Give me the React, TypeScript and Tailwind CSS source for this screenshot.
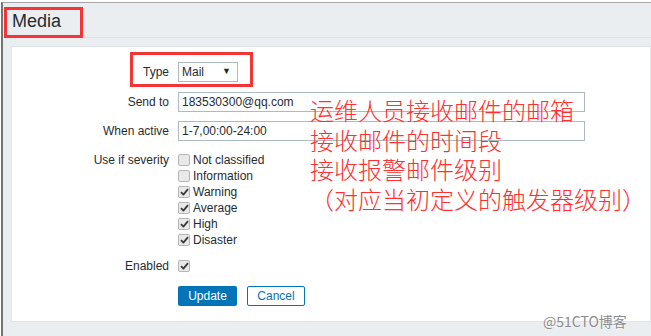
import React from 'react';

const font = { fontFamily: '"Liberation Sans", Arial, sans-serif' };

function Check({ checked }: { checked?: boolean }) {
  return (
    <span className="flex h-[12px] w-[12px] shrink-0 items-center justify-center rounded-[2px] border border-[#b5b5b5] bg-[#e9e9e9]">
      {checked && (
        <svg width="9" height="8" viewBox="0 0 9 8">
          <path d="M1 4.2 L3.4 6.6 L8 1.2" fill="none" stroke="#3a3a3a" strokeWidth="1.8" strokeLinejoin="round" />
        </svg>
      )}
    </span>
  );
}

export default function App() {
  const severities = [
    { label: 'Not classified', on: false },
    { label: 'Information', on: false },
    { label: 'Warning', on: true },
    { label: 'Average', on: true },
    { label: 'High', on: true },
    { label: 'Disaster', on: true },
  ];

  return (
    <div className="relative h-[336px] w-[651px] overflow-hidden bg-white pl-[1px] pt-[2px] text-[12px] text-[#1f2c33]" style={font}>
      <div className="h-full border-l-2 border-t border-l-[#747474] border-t-[#a6a6a6] bg-[#ebeef0]">
        {/* header */}
        <div className="flex h-[35px] items-center border-b border-[#dde2e5] pl-[9px] pt-[2px] text-[18px]">
          Media
        </div>

        {/* form panel */}
        <div className="ml-[8px] mt-[8px] border border-[#dfe4e7] bg-white pb-[15px] pt-[15px]">
          <div className="grid grid-cols-[157px_1fr] gap-x-[9px]">
            <div className="flex h-[20px] items-center justify-end">Type</div>
            <div className="flex h-[20px] w-[60px] items-center justify-between border border-[#acbbc2] pl-[3px] pr-[6px]">
              <span>Mail</span>
              <span className="text-[9px]">▼</span>
            </div>

            <div className="mt-[10px] flex h-[20px] items-center justify-end">Send to</div>
            <div className="mt-[10px] flex h-[20px] w-[407px] items-center border border-[#acbbc2] pl-[3px]">183530300@qq.com</div>

            <div className="mt-[9px] flex h-[20px] items-center justify-end">When active</div>
            <div className="mt-[9px] flex h-[20px] w-[407px] items-center border border-[#acbbc2] pl-[3px]">1-7,00:00-24:00</div>

            <div className="mt-[11px] flex h-[16px] items-center justify-end">Use if severity</div>
            <div className="mt-[11px] flex flex-col">
              {severities.map((s) => (
                <label key={s.label} className="flex h-[16px] items-center gap-[3px]">
                  <Check checked={s.on} />
                  <span>{s.label}</span>
                </label>
              ))}
            </div>

            <div className="mt-[8px] flex h-[20px] items-center justify-end">Enabled</div>
            <div className="mt-[8px] flex h-[20px] items-center">
              <Check checked />
            </div>

            <div className="mt-[10px]" />
            <div className="mt-[10px] flex gap-[10px]">
              <button className="h-[20px] w-[59px] rounded-[2px] bg-[#0275b8] text-white">Update</button>
              <button className="h-[20px] w-[58px] rounded-[2px] border border-[#0275b8] bg-white text-[#0275b8]">Cancel</button>
            </div>
          </div>
        </div>
      </div>

      {/* annotations */}
      <div className="absolute left-[4px] top-[7px] h-[31px] w-[79px] border-[3px] border-[#f33535]" />
      <div className="absolute left-[130px] top-[52px] h-[35px] w-[123px] border-[3px] border-[#f33535]" />
      <div
        className="absolute left-[310px] top-[95px] text-[24px] font-light leading-[29.5px] text-[#ff3030]"
        style={{ fontFamily: '"Noto Sans CJK SC", sans-serif' }}
      >
        运维人员接收邮件的邮箱
        <br />
        接收邮件的时间段
        <br />
        接收报警邮件级别
        <br />
        （对应当初定义的触发器级别）
      </div>
      <div
        className="absolute left-[543px] top-[311px] text-[14px] text-[#8c8c8c]"
        style={{ fontFamily: '"Noto Sans CJK SC", sans-serif', textShadow: '0 0 2px #fff' }}
      >
        @51CTO博客
      </div>
    </div>
  );
}
